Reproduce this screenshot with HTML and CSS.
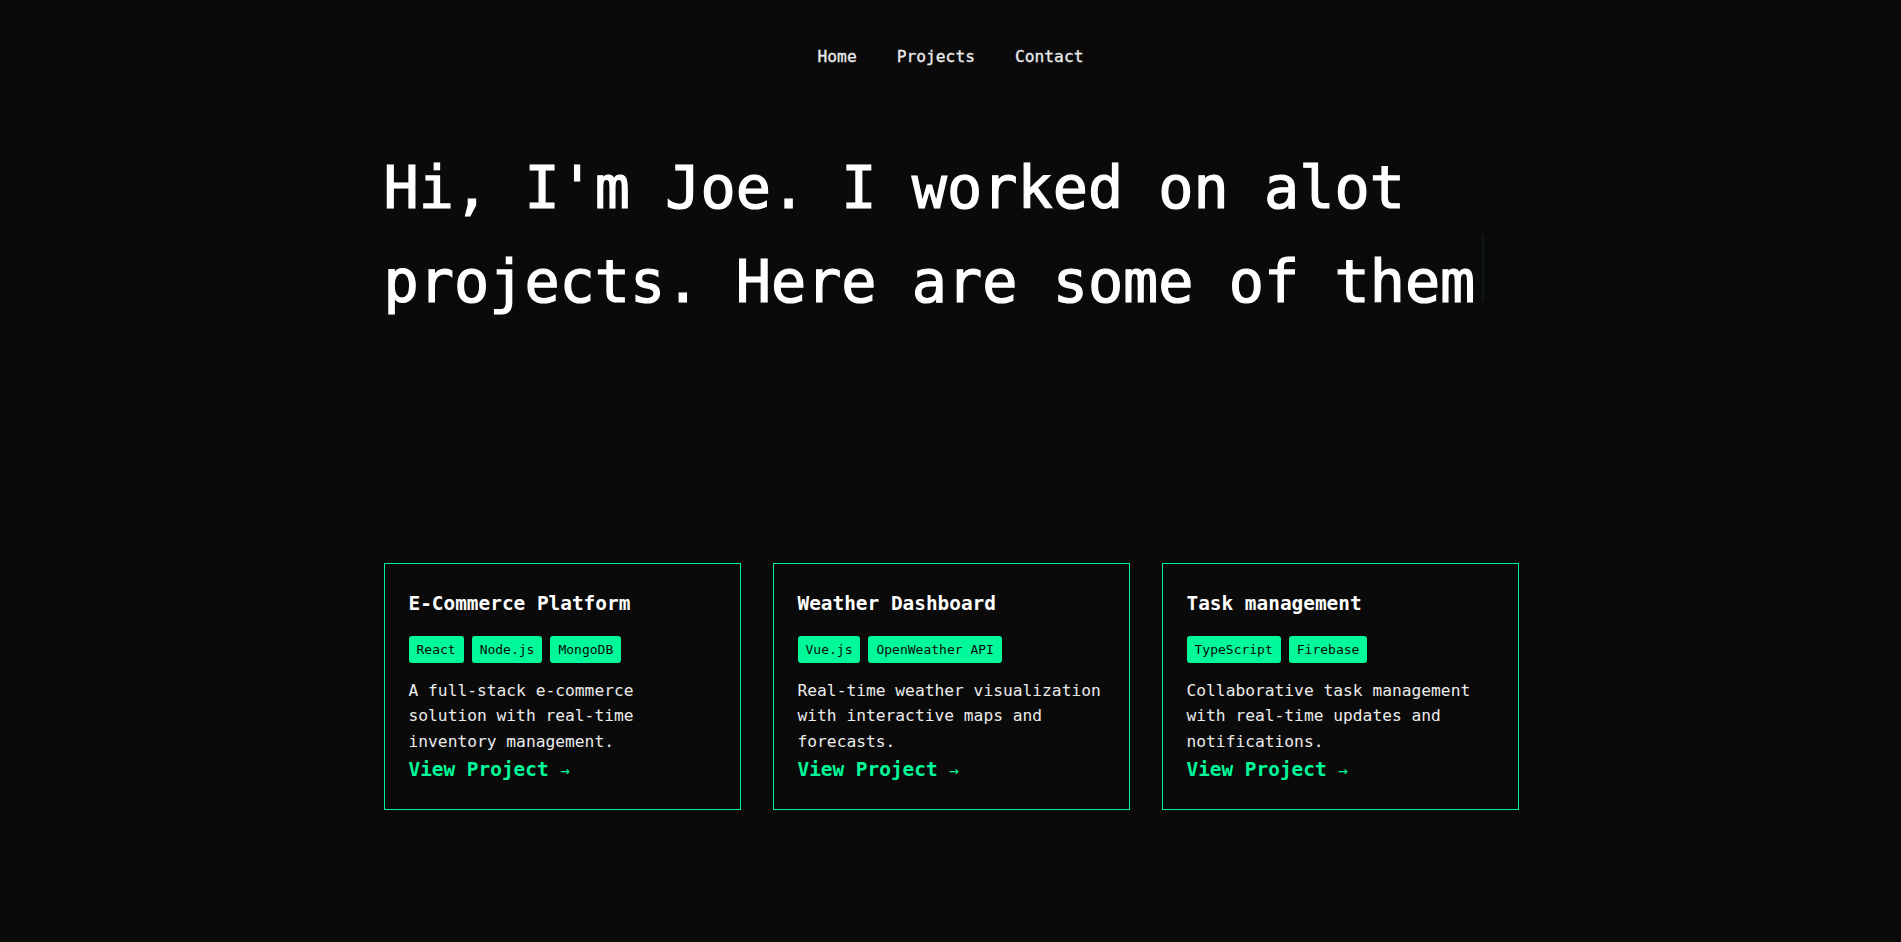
FILE: index.html
```html
<!DOCTYPE html>
<html lang="en">
<head>
<meta charset="utf-8">
<title>Joe — Projects</title>
<link rel="stylesheet" href="styles.css">
</head>
<body>
  <nav class="nav">
    <a class="nav-link" href="#">Home</a>
    <a class="nav-link" href="#">Projects</a>
    <a class="nav-link" href="#">Contact</a>
  </nav>
  <main class="container">
    <section class="hero">
      <h1 class="hero-title">Hi, I'm Joe. I worked on alot projects. Here are some of them<span class="cursor"></span></h1>
    </section>
    <section class="cards">
      <article class="card">
        <h3 class="card-title">E-Commerce Platform</h3>
        <div class="tags">
          <span class="tag">React</span>
          <span class="tag">Node.js</span>
          <span class="tag">MongoDB</span>
        </div>
        <p class="card-desc">A full-stack e-commerce solution with real-time inventory management.</p>
        <a class="card-link" href="#">View Project <span class="arrow">→</span></a>
      </article>
      <article class="card">
        <h3 class="card-title">Weather Dashboard</h3>
        <div class="tags">
          <span class="tag">Vue.js</span>
          <span class="tag">OpenWeather API</span>
        </div>
        <p class="card-desc">Real-time weather visualization with interactive maps and forecasts.</p>
        <a class="card-link" href="#">View Project <span class="arrow">→</span></a>
      </article>
      <article class="card">
        <h3 class="card-title">Task management</h3>
        <div class="tags">
          <span class="tag">TypeScript</span>
          <span class="tag">Firebase</span>
        </div>
        <p class="card-desc">Collaborative task management with real-time updates and notifications.</p>
        <a class="card-link" href="#">View Project <span class="arrow">→</span></a>
      </article>
    </section>
  </main>
</body>
</html>
```
FILE: styles.css
```css
* { box-sizing: border-box; }

html, body {
  margin: 0;
  padding: 0;
  background: #0a0a0a;
  color: #ffffff;
  font-family: "DejaVu Sans Mono", "Liberation Mono", monospace;
}

.nav {
  display: flex;
  justify-content: center;
  gap: 40px;
  padding-top: 45px;
}

.nav-link {
  color: #ececec;
  text-decoration: none;
  font-size: 16.25px;
  line-height: 24px;
  -webkit-text-stroke: 0.3px #ececec;
}

.container {
  width: 1136px;
  margin: 0 auto;
  padding-left: 1px;
}

.hero {
  padding-top: 73px;
  padding-bottom: 235px;
}

.hero-title {
  margin: 0;
  font-size: 58.5px;
  line-height: 92px;
  font-weight: 400;
  letter-spacing: 0;
  color: #ffffff;
  -webkit-text-stroke: 1.2px #ffffff;
}

.cursor {
  display: inline-block;
  width: 2px;
  height: 68px;
  margin-left: 7px;
  background: #101a15;
  -webkit-text-stroke: 0;
}

.cards {
  display: grid;
  grid-template-columns: repeat(3, 1fr);
  gap: 32px;
}

.card {
  border: 1px solid #00f59a;
  padding: 25px 24px 23px;
  display: flex;
  flex-direction: column;
}

.card-title {
  margin: 0 0 17px;
  font-size: 19.4px;
  line-height: 30px;
  font-weight: 700;
  color: #ffffff;
}

.tags {
  display: flex;
  gap: 8px;
  flex-wrap: wrap;
}

.tag {
  background: #00fa9a;
  color: #0a0a0a;
  font-size: 13px;
  line-height: 19px;
  padding: 4px 8px;
  border-radius: 3px;
}

.card-desc {
  margin: 14.6px 0 0;
  font-size: 16.25px;
  line-height: 25.6px;
  color: #ececec;
}

.card-link {
  color: #00fa9a;
  text-decoration: none;
  font-size: 19.4px;
  line-height: 31px;
  font-weight: 700;
}

.arrow {
  font-size: 16px;
  font-weight: 400;
}
```
